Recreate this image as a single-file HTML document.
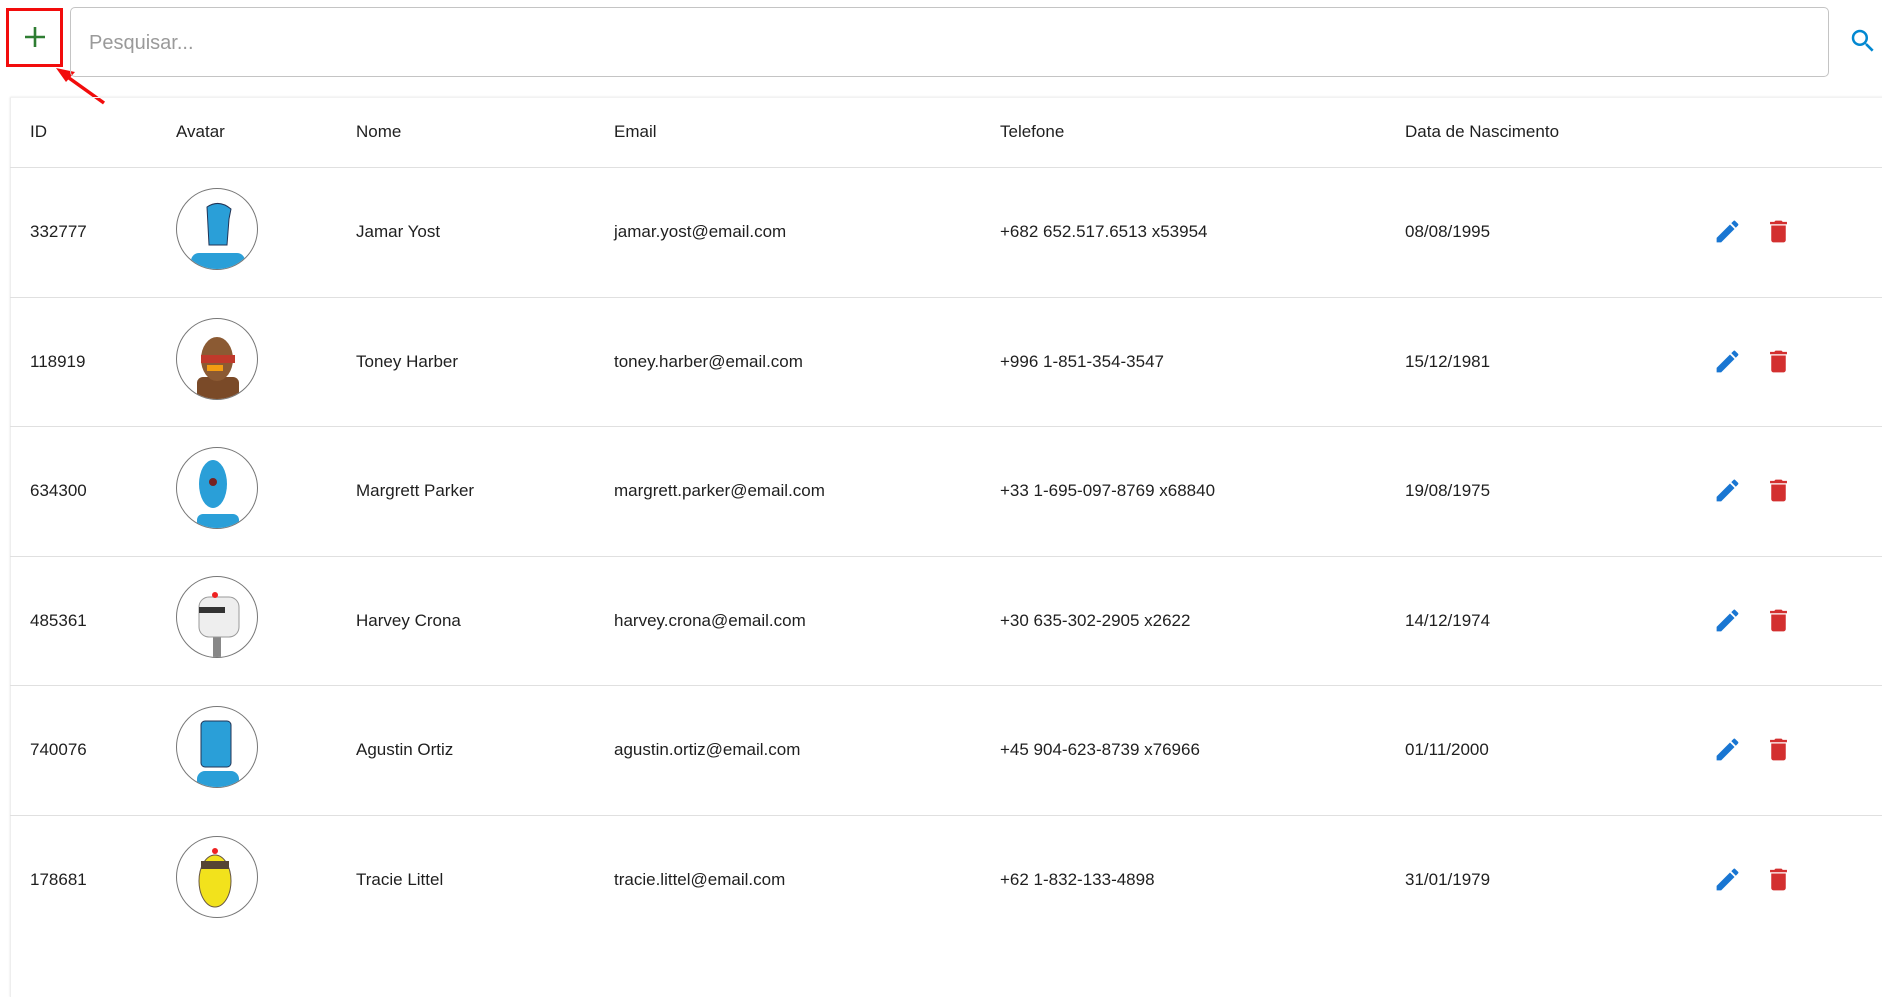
<!DOCTYPE html>
<html><head><meta charset="utf-8"><style>
*{box-sizing:border-box;margin:0;padding:0}
body{width:1882px;height:917px;overflow:hidden;background:#fff;font-family:"Liberation Sans",Arial,sans-serif;color:#1f1f1f;position:relative}
.plus{position:absolute;left:6px;top:8px;width:57px;height:59px;border:3px solid #f20c0c;}
.plus svg{position:absolute;left:12px;top:12px}
.search{position:absolute;left:70px;top:7px;width:1759px;height:70px;border:1px solid #c4c4c4;border-radius:5px;font-size:20px;color:#9a9a9a;padding:24px 0 0 18px}
.sicon{position:absolute;left:1848px;top:26px}
.card{position:absolute;left:10px;top:97px;width:1900px;height:900px;border-top:1px solid #f2f2f2;border-left:1px solid #eee;box-shadow:0 0 2px rgba(0,0,0,.12)}
.row{position:absolute;left:10px;width:1880px;border-bottom:1px solid #e0e0e0;font-size:17px}
.row span{position:absolute}
.av{position:absolute;left:176px;width:82px;height:82px;border-radius:50%;border:1px solid #777;overflow:hidden}
.ic{position:absolute}
</style></head><body>
<div class="plus"><svg width="28" height="28" viewBox="0 0 28 28"><path d="M14 4v20M4 14h20" stroke="#2e7d32" stroke-width="2.6"/></svg></div>
<svg style="position:absolute;left:50px;top:64px" width="60" height="45"><path d="M104 103 L62 73" transform="translate(-50,-64)" stroke="#f20c0c" stroke-width="3.5" fill="none"/><path d="M56 68 L75 72 L66 82 Z" transform="translate(-50,-64)" fill="#f20c0c"/></svg>
<div class="search">Pesquisar...</div>
<svg class="sicon" width="30" height="30" viewBox="0 0 24 24"><path fill="#0288d1" d="M15.5 14h-.79l-.28-.27A6.47 6.47 0 0 0 16 9.5 6.5 6.5 0 1 0 9.5 16c1.61 0 3.09-.59 4.23-1.57l.27.28v.79l5 4.99L20.49 19l-4.99-5zm-6 0C7.01 14 5 11.99 5 9.5S7.01 5 9.5 5 14 7.01 14 9.5 11.99 14 9.5 14z"/></svg>
<div class="card"></div>
<div class="row" style="top:98px;height:70px"><span style="left:20px;top:24px">ID</span><span style="left:166px;top:24px">Avatar</span><span style="left:346px;top:24px">Nome</span><span style="left:604px;top:24px">Email</span><span style="left:990px;top:24px">Telefone</span><span style="left:1395px;top:24px">Data de Nascimento</span></div>

<div class="row" style="top:168px;height:130px"><span style="left:20px;top:54px">332777</span><span style="left:346px;top:54px">Jamar Yost</span><span style="left:604px;top:54px">jamar.yost@email.com</span><span style="left:990px;top:54px">+682 652.517.6513 x53954</span><span style="left:1395px;top:54px">08/08/1995</span></div>
<div class="row" style="top:298px;height:129px"><span style="left:20px;top:54px">118919</span><span style="left:346px;top:54px">Toney Harber</span><span style="left:604px;top:54px">toney.harber@email.com</span><span style="left:990px;top:54px">+996 1-851-354-3547</span><span style="left:1395px;top:54px">15/12/1981</span></div>
<div class="row" style="top:427px;height:130px"><span style="left:20px;top:54px">634300</span><span style="left:346px;top:54px">Margrett Parker</span><span style="left:604px;top:54px">margrett.parker@email.com</span><span style="left:990px;top:54px">+33 1-695-097-8769 x68840</span><span style="left:1395px;top:54px">19/08/1975</span></div>
<div class="row" style="top:557px;height:129px"><span style="left:20px;top:54px">485361</span><span style="left:346px;top:54px">Harvey Crona</span><span style="left:604px;top:54px">harvey.crona@email.com</span><span style="left:990px;top:54px">+30 635-302-2905 x2622</span><span style="left:1395px;top:54px">14/12/1974</span></div>
<div class="row" style="top:686px;height:130px"><span style="left:20px;top:54px">740076</span><span style="left:346px;top:54px">Agustin Ortiz</span><span style="left:604px;top:54px">agustin.ortiz@email.com</span><span style="left:990px;top:54px">+45 904-623-8739 x76966</span><span style="left:1395px;top:54px">01/11/2000</span></div>
<div class="row" style="top:816px;height:130px;border:none"><span style="left:20px;top:54px">178681</span><span style="left:346px;top:54px">Tracie Littel</span><span style="left:604px;top:54px">tracie.littel@email.com</span><span style="left:990px;top:54px">+62 1-832-133-4898</span><span style="left:1395px;top:54px">31/01/1979</span></div>

<div class="av" style="top:188px"><svg width="82" height="82"><rect x="14" y="64" width="54" height="20" rx="8" fill="#2a9fd8"/><path d="M30 18 q12-8 24 2 l-2 10 l-2 26 h-18 z" fill="#2a9fd8" stroke="#235" stroke-width="1"/></svg></div>
<div class="av" style="top:318px"><svg width="82" height="82"><rect x="20" y="58" width="42" height="26" rx="6" fill="#7a4a28"/><ellipse cx="40" cy="40" rx="16" ry="22" fill="#8b5a33"/><rect x="24" y="36" width="34" height="8" fill="#c0392b"/><rect x="30" y="46" width="16" height="6" fill="#f39c12"/></svg></div>
<div class="av" style="top:447px"><svg width="82" height="82"><rect x="20" y="66" width="42" height="18" rx="6" fill="#2a9fd8"/><ellipse cx="36" cy="36" rx="14" ry="24" fill="#2a9fd8"/><circle cx="36" cy="34" r="4" fill="#722"/></svg></div>
<div class="av" style="top:576px"><svg width="82" height="82"><rect x="36" y="56" width="8" height="26" fill="#888"/><rect x="22" y="20" width="40" height="40" rx="10" fill="#eee" stroke="#999"/><rect x="22" y="30" width="26" height="6" fill="#333"/><circle cx="38" cy="18" r="3" fill="#e22"/></svg></div>
<div class="av" style="top:706px"><svg width="82" height="82"><rect x="20" y="64" width="42" height="20" rx="8" fill="#2a9fd8"/><rect x="24" y="14" width="30" height="46" rx="4" fill="#2a9fd8" stroke="#235"/></svg></div>
<div class="av" style="top:836px"><svg width="82" height="82"><ellipse cx="38" cy="44" rx="16" ry="26" fill="#f2e21c" stroke="#654"/><rect x="24" y="24" width="28" height="8" fill="#543"/><circle cx="38" cy="14" r="3" fill="#e22"/></svg></div>

<svg class="ic" style="left:1713px;top:217px" width="29" height="29" viewBox="0 0 24 24"><path fill="#1976d2" d="M3 17.25V21h3.75L17.81 9.94l-3.75-3.75L3 17.25zM20.71 7.04a1 1 0 0 0 0-1.41l-2.34-2.34a1 1 0 0 0-1.41 0l-1.83 1.83 3.75 3.75 1.83-1.83z"/></svg>
<svg class="ic" style="left:1764px;top:217px" width="29" height="29" viewBox="0 0 24 24"><path fill="#d32f2f" d="M6 19c0 1.1.9 2 2 2h8c1.1 0 2-.9 2-2V7H6v12zM19 4h-3.5l-1-1h-5l-1 1H5v2h14V4z"/></svg>
<svg class="ic" style="left:1713px;top:347px" width="29" height="29" viewBox="0 0 24 24"><path fill="#1976d2" d="M3 17.25V21h3.75L17.81 9.94l-3.75-3.75L3 17.25zM20.71 7.04a1 1 0 0 0 0-1.41l-2.34-2.34a1 1 0 0 0-1.41 0l-1.83 1.83 3.75 3.75 1.83-1.83z"/></svg>
<svg class="ic" style="left:1764px;top:347px" width="29" height="29" viewBox="0 0 24 24"><path fill="#d32f2f" d="M6 19c0 1.1.9 2 2 2h8c1.1 0 2-.9 2-2V7H6v12zM19 4h-3.5l-1-1h-5l-1 1H5v2h14V4z"/></svg>
<svg class="ic" style="left:1713px;top:476px" width="29" height="29" viewBox="0 0 24 24"><path fill="#1976d2" d="M3 17.25V21h3.75L17.81 9.94l-3.75-3.75L3 17.25zM20.71 7.04a1 1 0 0 0 0-1.41l-2.34-2.34a1 1 0 0 0-1.41 0l-1.83 1.83 3.75 3.75 1.83-1.83z"/></svg>
<svg class="ic" style="left:1764px;top:476px" width="29" height="29" viewBox="0 0 24 24"><path fill="#d32f2f" d="M6 19c0 1.1.9 2 2 2h8c1.1 0 2-.9 2-2V7H6v12zM19 4h-3.5l-1-1h-5l-1 1H5v2h14V4z"/></svg>
<svg class="ic" style="left:1713px;top:606px" width="29" height="29" viewBox="0 0 24 24"><path fill="#1976d2" d="M3 17.25V21h3.75L17.81 9.94l-3.75-3.75L3 17.25zM20.71 7.04a1 1 0 0 0 0-1.41l-2.34-2.34a1 1 0 0 0-1.41 0l-1.83 1.83 3.75 3.75 1.83-1.83z"/></svg>
<svg class="ic" style="left:1764px;top:606px" width="29" height="29" viewBox="0 0 24 24"><path fill="#d32f2f" d="M6 19c0 1.1.9 2 2 2h8c1.1 0 2-.9 2-2V7H6v12zM19 4h-3.5l-1-1h-5l-1 1H5v2h14V4z"/></svg>
<svg class="ic" style="left:1713px;top:735px" width="29" height="29" viewBox="0 0 24 24"><path fill="#1976d2" d="M3 17.25V21h3.75L17.81 9.94l-3.75-3.75L3 17.25zM20.71 7.04a1 1 0 0 0 0-1.41l-2.34-2.34a1 1 0 0 0-1.41 0l-1.83 1.83 3.75 3.75 1.83-1.83z"/></svg>
<svg class="ic" style="left:1764px;top:735px" width="29" height="29" viewBox="0 0 24 24"><path fill="#d32f2f" d="M6 19c0 1.1.9 2 2 2h8c1.1 0 2-.9 2-2V7H6v12zM19 4h-3.5l-1-1h-5l-1 1H5v2h14V4z"/></svg>
<svg class="ic" style="left:1713px;top:865px" width="29" height="29" viewBox="0 0 24 24"><path fill="#1976d2" d="M3 17.25V21h3.75L17.81 9.94l-3.75-3.75L3 17.25zM20.71 7.04a1 1 0 0 0 0-1.41l-2.34-2.34a1 1 0 0 0-1.41 0l-1.83 1.83 3.75 3.75 1.83-1.83z"/></svg>
<svg class="ic" style="left:1764px;top:865px" width="29" height="29" viewBox="0 0 24 24"><path fill="#d32f2f" d="M6 19c0 1.1.9 2 2 2h8c1.1 0 2-.9 2-2V7H6v12zM19 4h-3.5l-1-1h-5l-1 1H5v2h14V4z"/></svg>
</body></html>
